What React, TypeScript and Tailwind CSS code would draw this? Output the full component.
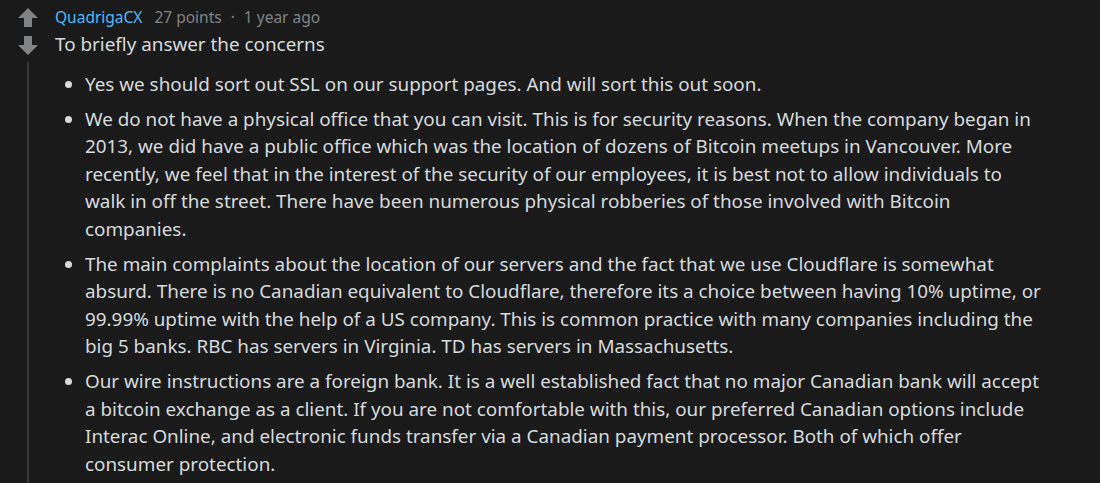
const items = [
  'Yes we should sort out SSL on our support pages. And will sort this out soon.',
  'We do not have a physical office that you can visit. This is for security reasons. When the company began in 2013, we did have a public office which was the location of dozens of Bitcoin meetups in Vancouver. More recently, we feel that in the interest of the security of our employees, it is best not to allow individuals to walk in off the street. There have been numerous physical robberies of those involved with Bitcoin companies.',
  'The main complaints about the location of our servers and the fact that we use Cloudflare is somewhat absurd. There is no Canadian equivalent to Cloudflare, therefore its a choice between having 10% uptime, or 99.99% uptime with the help of a US company. This is common practice with many companies including the big 5 banks. RBC has servers in Virginia. TD has servers in Massachusetts.',
  'Our wire instructions are a foreign bank. It is a well established fact that no major Canadian bank will accept a bitcoin exchange as a client. If you are not comfortable with this, our preferred Canadian options include Interac Online, and electronic funds transfer via a Canadian payment processor. Both of which offer consumer protection.',
];

function Arrow({ down = false }: { down?: boolean }) {
  return (
    <svg width="20" height="19" viewBox="0 0 20 19" className={down ? 'rotate-180' : ''}>
      <path d="M10 0 L20 10 H14 V19 H6 V10 H0 Z" fill="#818384" />
    </svg>
  );
}

export default function App() {
  return (
    <div className="h-[483px] w-[1100px] overflow-hidden bg-[#1a1a1b] font-['Noto_Sans',sans-serif] text-[#d7dadc]">
      <div className="flex pt-[8px] pl-[18px]">
        <div className="flex w-[20px] flex-col items-center">
          <Arrow />
          <div className="mt-[9px]">
            <Arrow down />
          </div>
          <div className="mt-[7px] h-[440px] w-[2px] bg-[#37373a]" />
        </div>
        <div className="ml-[17px] w-[995px]">
          <div className="-mt-[1px] flex items-center text-[15.5px] leading-[20px] text-[#818384]">
            <span className="text-[#4fbcff]">QuadrigaCX</span>
            <span className="ml-[12px]">27 points</span>
            <span className="mx-[9px]">·</span>
            <span>1 year ago</span>
          </div>
          <p className="mt-[4px] text-[18.85px] leading-[27.5px]">To briefly answer the concerns</p>
          <ul className="mt-[12px] w-[990px] list-disc pl-[30px] text-[18.85px] leading-[27.5px]">
            {items.map((t) => (
              <li key={t} className="mb-[7.5px]">
                {t}
              </li>
            ))}
          </ul>
        </div>
      </div>
    </div>
  );
}
